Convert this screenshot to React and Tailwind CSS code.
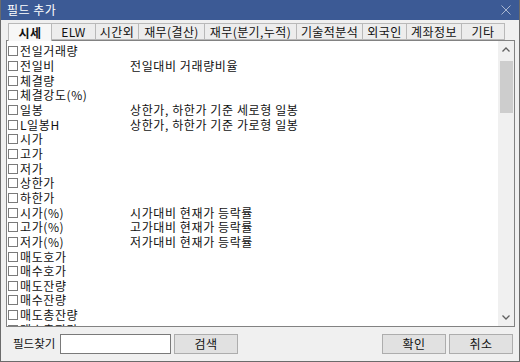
import React from "react";

const tabs = [
  { label: "시세", w: 44, active: true },
  { label: "ELW", w: 44 },
  { label: "시간외", w: 43 },
  { label: "재무(결산)", w: 66 },
  { label: "재무(분기,누적)", w: 92 },
  { label: "기술적분석", w: 66 },
  { label: "외국인", w: 44 },
  { label: "계좌정보", w: 55 },
  { label: "기타", w: 43 },
];

const rows = [
  ["전일거래량", ""],
  ["전일비", "전일대비 거래량비율"],
  ["체결량", ""],
  ["체결강도(%)", ""],
  ["일봉", "상한가, 하한가 기준 세로형 일봉"],
  ["L일봉H", "상한가, 하한가 기준 가로형 일봉"],
  ["시가", ""],
  ["고가", ""],
  ["저가", ""],
  ["상한가", ""],
  ["하한가", ""],
  ["시가(%)", "시가대비 현재가 등락률"],
  ["고가(%)", "고가대비 현재가 등락률"],
  ["저가(%)", "저가대비 현재가 등락률"],
  ["매도호가", ""],
  ["매수호가", ""],
  ["매도잔량", ""],
  ["매수잔량", ""],
  ["매도총잔량", ""],
  ["매수총잔량", ""],
];

const font = "font-['Noto_Sans_CJK_KR','Noto_Sans',sans-serif]";

export default function App() {
  return (
    <div className={`w-[520px] h-[362px] bg-[#f0f0f0] flex flex-col border-x border-b border-[#6b6b6b] overflow-hidden text-[#111] ${font}`}>
      {/* title bar */}
      <div className="h-[20px] bg-[#3c5a95] flex items-center justify-between pl-[6px] pr-[8px] shrink-0">
        <span className="text-white text-[12px] leading-none tracking-[0.5px]">필드 추가</span>
        <svg width="10" height="10" viewBox="0 0 10 10">
          <path d="M0.5 0.5 L9.5 9.5 M9.5 0.5 L0.5 9.5" stroke="#a9b6d0" strokeWidth="1" />
        </svg>
      </div>

      <div className="flex flex-col pl-[5px] pr-[4px] pt-[2px]">
        {/* tabs */}
        <div className="flex h-[18px] pl-[2px] items-end">
          {tabs.map((t) => (
            <div
              key={t.label}
              style={{ width: t.w }}
              className={
                t.active
                  ? "h-[18px] flex items-center justify-center border-t border-l border-r border-[#b9b9b9] bg-[#f7f7f7] text-[12px] tracking-[0.4px] font-bold leading-none -mb-px relative z-10"
                  : "h-[17px] flex items-center justify-center border-t border-r border-b border-[#b9b9b9] bg-[#ededed] text-[12px] tracking-[0.4px] leading-none"
              }
            >
              {t.label}
            </div>
          ))}
        </div>

        {/* list box */}
        <div className="h-[287px] border border-[#828282] bg-white flex">
          <div className="flex-1 overflow-hidden pt-[3px]">
            {rows.map(([a, b]) => (
              <div key={a} className="h-[14.67px] flex items-center text-[12px] tracking-[0.6px] leading-[14px]">
                <div className="w-[123px] flex items-center shrink-0">
                  <span className="w-[10px] h-[10px] border border-[#7a7a7a] bg-white ml-[1px] mr-[2px] shrink-0" />
                  <span>{a}</span>
                </div>
                <span>{b}</span>
              </div>
            ))}
          </div>
          {/* scrollbar */}
          <div className="w-[16px] bg-[#f0f0f0] flex flex-col items-center">
            <div className="h-[17px] w-full flex items-center justify-center">
              <svg width="8" height="5" viewBox="0 0 8 5">
                <path d="M0.5 4.5 L4 1 L7.5 4.5" stroke="#606060" strokeWidth="1.3" fill="none" />
              </svg>
            </div>
            <div className="w-[13px] h-[52px] bg-[#cdcdcd] mt-[3px]" />
            <div className="flex-1" />
            <div className="h-[17px] w-full flex items-center justify-center">
              <svg width="8" height="5" viewBox="0 0 8 5">
                <path d="M0.5 0.5 L4 4 L7.5 0.5" stroke="#606060" strokeWidth="1.3" fill="none" />
              </svg>
            </div>
          </div>
        </div>

        {/* bottom row */}
        <div className="flex items-center h-[20px] mt-[7px] text-[12px] tracking-[0.4px] leading-none">
          <span className="ml-[7px] w-[47px] tracking-normal text-[11.5px]">필드찾기</span>
          <div className="w-[111px] h-[20px] border border-[#7a7a7a] bg-white" />
          <div className="w-[64px] h-[20px] ml-[3px] border border-[#adadad] bg-[#e1e1e1] flex items-center justify-center">검색</div>
          <div className="flex-1" />
          <div className="w-[64px] h-[20px] border border-[#adadad] bg-[#e1e1e1] flex items-center justify-center">확인</div>
          <div className="w-[64px] h-[20px] ml-[3px] mr-[2px] border border-[#adadad] bg-[#e1e1e1] flex items-center justify-center">취소</div>
        </div>
      </div>
    </div>
  );
}
